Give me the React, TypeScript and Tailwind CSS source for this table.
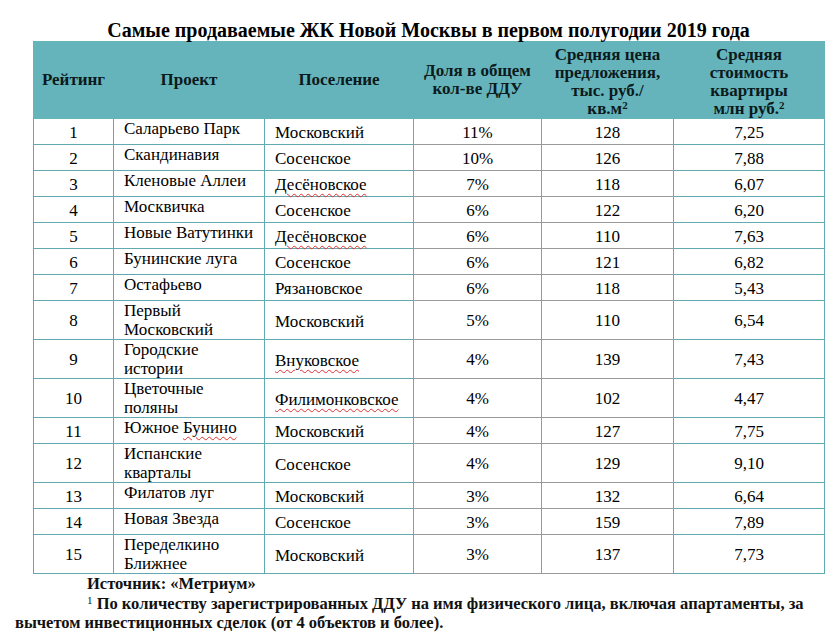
import React from "react";

type Row = { n: number; p: string[]; s: string; wavy?: boolean; pw?: string; d: string; price: number; cost: string };

const rows: Row[] = [
  { n: 1, p: ["Саларьево Парк"], s: "Московский", d: "11%", price: 128, cost: "7,25" },
  { n: 2, p: ["Скандинавия"], s: "Сосенское", d: "10%", price: 126, cost: "7,88" },
  { n: 3, p: ["Кленовые Аллеи"], s: "Десёновское", wavy: true, d: "7%", price: 118, cost: "6,07" },
  { n: 4, p: ["Москвичка"], s: "Сосенское", d: "6%", price: 122, cost: "6,20" },
  { n: 5, p: ["Новые Ватутинки"], s: "Десёновское", wavy: true, d: "6%", price: 110, cost: "7,63" },
  { n: 6, p: ["Бунинские луга"], s: "Сосенское", d: "6%", price: 121, cost: "6,82" },
  { n: 7, p: ["Остафьево"], s: "Рязановское", d: "6%", price: 118, cost: "5,43" },
  { n: 8, p: ["Первый", "Московский"], s: "Московский", d: "5%", price: 110, cost: "6,54" },
  { n: 9, p: ["Городские", "истории"], s: "Внуковское", wavy: true, d: "4%", price: 139, cost: "7,43" },
  { n: 10, p: ["Цветочные", "поляны"], s: "Филимонковское", wavy: true, d: "4%", price: 102, cost: "4,47" },
  { n: 11, p: ["Южное "], pw: "Бунино", s: "Московский", d: "4%", price: 127, cost: "7,75" },
  { n: 12, p: ["Испанские", "кварталы"], s: "Сосенское", d: "4%", price: 129, cost: "9,10" },
  { n: 13, p: ["Филатов луг"], s: "Московский", d: "3%", price: 132, cost: "6,64" },
  { n: 14, p: ["Новая Звезда"], s: "Сосенское", d: "3%", price: 159, cost: "7,89" },
  { n: 15, p: ["Переделкино", "Ближнее"], s: "Московский", d: "3%", price: 137, cost: "7,73" },
];

const wavy = "underline decoration-wavy decoration-[#e03030] decoration-1 underline-offset-[3px]";

export default function App() {
  return (
    <div
      className="w-[840px] h-[641px] bg-white text-black overflow-hidden"
      style={{ fontFamily: '"Liberation Serif", "Times New Roman", serif' }}
    >
      <div className="ml-[33px] w-[791px]">
        <div className="pt-[19px] h-[41px] text-center font-bold text-[20px] leading-[22px] text-black whitespace-nowrap">
          Самые продаваемые ЖК Новой Москвы в первом полугодии 2019 года
        </div>
        <table className="border-collapse table-fixed w-[791px] text-[17px]">
          <colgroup>
            <col className="w-[80px]" />
            <col className="w-[151px]" />
            <col className="w-[149px]" />
            <col className="w-[128px]" />
            <col className="w-[132px]" />
            <col className="w-[151px]" />
          </colgroup>
          <thead>
            <tr className="h-[77px] bg-[#66b4bb] text-[#0b1a1c] font-bold leading-[18px]">
              <th className="border border-[#66b4bb] font-bold text-center align-middle">Рейтинг</th>
              <th className="border border-[#66b4bb] font-bold text-center align-middle">Проект</th>
              <th className="border border-[#66b4bb] font-bold text-center align-middle">Поселение</th>
              <th className="border border-[#66b4bb] font-bold text-center align-middle">
                Доля в общем<br />кол-ве ДДУ
              </th>
              <th className="border border-[#66b4bb] font-bold text-center align-middle pt-[3px]">
                Средняя цена<br />предложения,<br />тыс. руб./<br />кв.м<span className="align-[5px] text-[11px] leading-[10px]">2</span>
              </th>
              <th className="border border-[#66b4bb] font-bold text-center align-middle pt-[3px]">
                Средняя<br />стоимость<br />квартиры<br />млн руб.<span className="align-[5px] text-[11px] leading-[10px]">2</span>
              </th>
            </tr>
          </thead>
          <tbody>
            {rows.map((r) => {
              const two = r.p.length > 1;
              return (
                <tr key={r.n} className={two ? "h-[39px]" : "h-[26px]"}>
                  <td className="border border-[#62aab2] text-center align-middle pt-[2px] leading-[18px]">{r.n}</td>
                  <td className="border border-[#62aab2] align-top pl-[10px] pt-[1px] leading-[18.5px]">
                    {r.p.map((t, i) => (
                      <div key={i}>
                        {t}
                        {r.pw && <span className={wavy}>{r.pw}</span>}
                      </div>
                    ))}
                  </td>
                  <td className="border border-[#62aab2] border-r-[#9a9a9a] align-middle pl-[10px] pt-[3px] leading-[18px]">
                    <span className={r.wavy ? wavy : ""}>{r.s}</span>
                  </td>
                  <td className="border border-[#9a9a9a] text-center align-middle pt-[2px] leading-[18px]">{r.d}</td>
                  <td className="border border-[#9a9a9a] border-r-[#62aab2] text-center align-middle pt-[2px] leading-[18px]">{r.price}</td>
                  <td className="border border-[#62aab2] text-center align-middle pt-[2px] leading-[18px]">{r.cost}</td>
                </tr>
              );
            })}
          </tbody>
        </table>
      </div>
      <div className="ml-[15px] w-[815px] font-bold text-[16.5px] leading-[19.5px] text-[#111]">
        <div className="pl-[72px]">Источник: «Метриум»</div>
        <div className="indent-[72px]">
          <span className="align-[5px] text-[11px] font-normal leading-[10px]">1</span> По количеству зарегистрированных ДДУ на имя физического лица, включая апартаменты, за вычетом инвестиционных сделок (от 4 объектов и более).
        </div>
      </div>
    </div>
  );
}
